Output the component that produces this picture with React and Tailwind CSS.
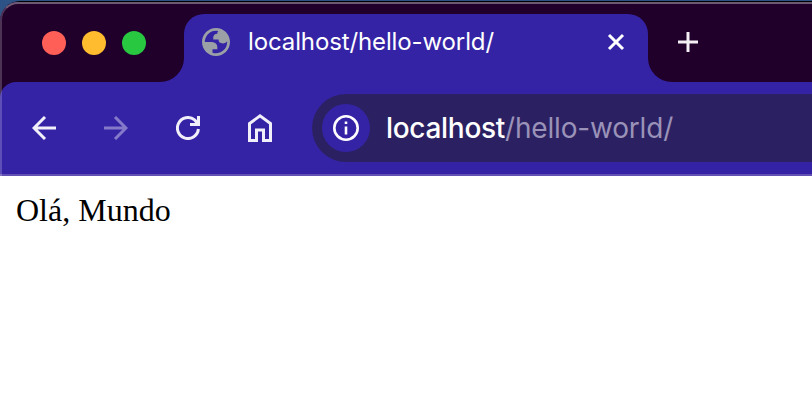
import React from 'react';

function TitleBar() {
  return (
    <div className="flex h-[80px] bg-[#3523a5]">
      <div className="flex w-[184px] items-start gap-4 rounded-br-[24px] bg-[#20002a] pt-[29px] pl-[42px]">
        <span className="size-6 rounded-full bg-[#ff5f57]" />
        <span className="size-6 rounded-full bg-[#febc2e]" />
        <span className="size-6 rounded-full bg-[#28c840]" />
      </div>
      <div className="flex w-[464px] bg-[linear-gradient(#20002a_40px,#3523a5_40px)] pt-3">
        <div className="flex h-[56px] w-full items-center rounded-t-[20px] bg-[#3523a5] pr-[22px] pl-[18px]">
          <svg className="size-7" viewBox="2 2 20 20" fill="#9aa0a6">
            <path fillRule="evenodd" d="M12 2C6.48 2 2 6.48 2 12s4.48 10 10 10 10-4.48 10-10S17.52 2 12 2zM4 12h4.4c3.407.022 4.922 1.73 4.543 5.127H9.488v2.47a8.004 8.004 0 0 0 10.498-8.083C19.327 12.504 18.332 13 17 13c-2.137 0-3.206-.916-3.206-2.75h-3.748c-.274-2.728.683-4.092 2.87-4.092 0-.975.327-1.597.811-1.97A8.004 8.004 0 0 0 4 12z" />
          </svg>
          <span className="ml-[18px] grow text-[24px] leading-7 tracking-[-0.12px] whitespace-nowrap text-white">localhost/hello-world/</span>
          <svg className="size-5" viewBox="0 0 20 20" fill="none" stroke="white" strokeWidth="3">
            <path d="M3 3l14 14M17 3L3 17" />
          </svg>
        </div>
      </div>
      <div className="grow rounded-bl-[24px] bg-[#20002a] pt-[30px] pl-[30px]">
        <svg className="size-5" viewBox="0 0 20 20" fill="none" stroke="#f3eff5" strokeWidth="3">
          <path d="M10 0v20M0 10h20" />
        </svg>
      </div>
    </div>
  );
}

function Toolbar() {
  return (
    <div className="bg-[#20002a]">
      <div className="flex h-[94px] items-center rounded-tl-[16px] border-b-2 border-[#6350b5] bg-[#3523a5] pl-8">
        <svg className="size-6" viewBox="0 0 24 24" fill="none" stroke="#f1effa" strokeWidth="3">
          <path d="M24 12H2M13 1L2 12l11 11" />
        </svg>
        <svg className="ml-12 size-6" viewBox="0 0 24 24" fill="none" stroke="#8579c9" strokeWidth="3">
          <path d="M0 12h22M11 1l11 11-11 11" />
        </svg>
        <svg className="ml-12 size-6" viewBox="0 0 24 24" fill="none" stroke="#f1effa" strokeWidth="3">
          <path d="M22.4 13A10.5 10.5 0 1 1 18.6 3.9L21 6.5" />
          <path d="M21 0h3v10H14V7h4.5L21 4.5z" fill="#f1effa" stroke="none" />
        </svg>
        <svg className="ml-12 h-7 w-6" viewBox="0 0 24 28" fill="none" stroke="#f1effa" strokeWidth="3">
          <path d="M1.5 26.5V9.5L12 1.9 22.5 9.5v17h-7V16h-7v10.5z" />
        </svg>
        <div className="ml-10 flex h-[68px] grow items-center rounded-l-full bg-[#2b2162] pl-[10px]">
          <span className="flex size-12 items-center justify-center rounded-full bg-[#3523a5]">
            <svg className="size-[26px]" viewBox="0 0 26 26" fill="white">
              <circle cx="13" cy="13" r="11.7" fill="none" stroke="white" strokeWidth="2.6" />
              <path d="M11.7 6.4h2.6V9h-2.6zM11.7 11.6h2.6v8h-2.6z" />
            </svg>
          </span>
          <div className="ml-4 text-[28px] leading-8 whitespace-nowrap">
            <span className="font-medium tracking-[-0.3px] text-white">localhost</span>
            <span className="tracking-[-0.18px] text-[#9a92b8]">/hello-world/</span>
          </div>
        </div>
      </div>
    </div>
  );
}

export default function App() {
  return (
    <div className="relative h-[400px] w-[812px] overflow-hidden bg-[#2c5286] font-['Inter',sans-serif]">
      <div className="mt-px h-[399px] overflow-hidden rounded-tl-[20px] bg-black pt-px">
        <div className="h-full overflow-hidden rounded-tl-[18px] bg-[#20002a]">
          <TitleBar />
          <Toolbar />
          <main className="h-[224px] bg-white px-4 pt-4 font-['Liberation_Serif',serif] text-[32px] leading-9 text-black">
            Olá, Mundo
          </main>
        </div>
      </div>
      <div className="pointer-events-none absolute top-[2px] left-0 h-[174px] w-full rounded-tl-[18px] border-t-2 border-l-2 border-t-white/35 border-l-white/20" />
    </div>
  );
}
